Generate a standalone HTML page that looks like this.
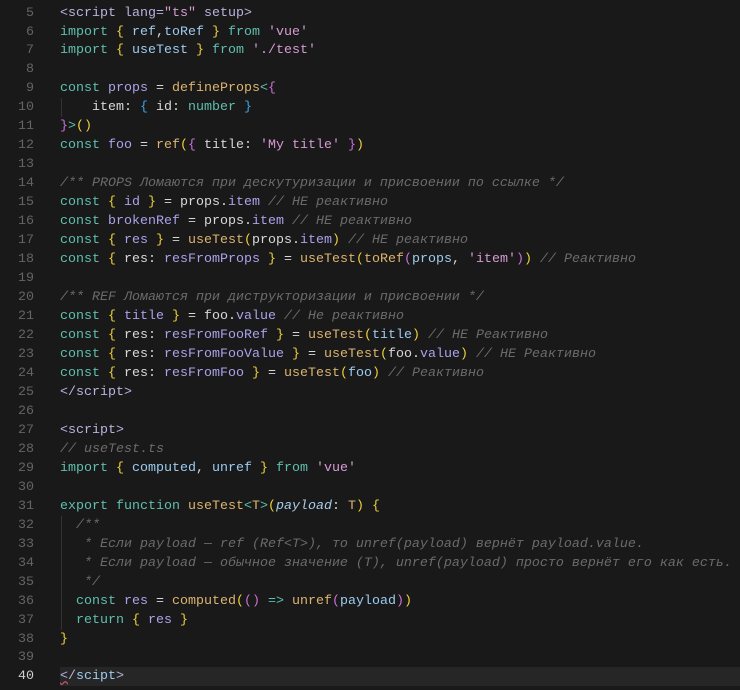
<!DOCTYPE html>
<html><head><meta charset="utf-8"><style>
html,body{margin:0;padding:0;background:#191919;width:740px;height:690px;overflow:hidden}
.ed{position:relative;width:740px;height:690px;font-family:"Liberation Mono","DejaVu Sans Mono",monospace;font-size:13.33px;}
.l{position:absolute;left:0;height:19px;line-height:19px;white-space:pre;width:740px}
.n{position:absolute;left:0;width:34px;text-align:right;color:#646464}
.c{position:absolute;left:60px;color:#d8d8d8}
.cur{background:#262626;left:60px;width:680px}
.k{color:#5fbfae}.v{color:#aaa2ea}.f{color:#dcb36f}.s{color:#d79ad2}.y{color:#eecf3c}.b{color:#3fa1e6}.p{color:#cc6fd6}
.cm{color:#6b6b6b;font-style:italic}.t{color:#b9b2df}.i{color:#9ccbf0}.w{color:#d4d4d4}.it{font-style:italic;color:#a9cde8}
.g{position:absolute;left:61px;width:1px;background:#333}
</style></head><body><div class="ed">
<div class="l cur" style="top:667px"></div>
<div class="g" style="top:98px;height:19px"></div>
<div class="g" style="top:516px;height:114px"></div>
<div class="l" style="top:3.5px"><span class="n">5</span><span class="c"><span class="t">&lt;script lang=</span><span class="s">"ts"</span><span class="t"> setup&gt;</span></span></div>
<div class="l" style="top:22.5px"><span class="n">6</span><span class="c"><span class="k">import</span> <span class="y">{</span> <span class="i">ref</span>,<span class="i">toRef</span> <span class="y">}</span> <span class="k">from</span> <span class="s">'vue'</span></span></div>
<div class="l" style="top:41.4px"><span class="n">7</span><span class="c"><span class="k">import</span> <span class="y">{</span> <span class="i">useTest</span> <span class="y">}</span> <span class="k">from</span> <span class="s">'./test'</span></span></div>
<div class="l" style="top:60.4px"><span class="n">8</span></div>
<div class="l" style="top:79.4px"><span class="n">9</span><span class="c"><span class="k">const</span> <span class="v">props</span> = <span class="f">defineProps</span><span class="k">&lt;</span><span class="p">{</span></span></div>
<div class="l" style="top:98.3px"><span class="n">10</span><span class="c">    item: <span class="b">{</span> id: <span class="k">number</span> <span class="b">}</span></span></div>
<div class="l" style="top:117.3px"><span class="n">11</span><span class="c"><span class="p">}</span><span class="k">&gt;</span><span class="y">()</span></span></div>
<div class="l" style="top:136.3px"><span class="n">12</span><span class="c"><span class="k">const</span> <span class="v">foo</span> = <span class="f">ref</span><span class="y">(</span><span class="p">{</span> title: <span class="s">'My title'</span> <span class="p">}</span><span class="y">)</span></span></div>
<div class="l" style="top:155.3px"><span class="n">13</span></div>
<div class="l" style="top:174.2px"><span class="n">14</span><span class="c"><span class="cm">/** PROPS Ломаются при дескутуризации и присвоении по ссылке */</span></span></div>
<div class="l" style="top:193.2px"><span class="n">15</span><span class="c"><span class="k">const</span> <span class="y">{</span> <span class="v">id</span> <span class="y">}</span> = props.<span class="v">item</span> <span class="cm">// НЕ реактивно</span></span></div>
<div class="l" style="top:212.2px"><span class="n">16</span><span class="c"><span class="k">const</span> <span class="v">brokenRef</span> = props.<span class="v">item</span> <span class="cm">// НЕ реактивно</span></span></div>
<div class="l" style="top:231.1px"><span class="n">17</span><span class="c"><span class="k">const</span> <span class="y">{</span> <span class="v">res</span> <span class="y">}</span> = <span class="f">useTest</span><span class="y">(</span>props.<span class="v">item</span><span class="y">)</span> <span class="cm">// НЕ реактивно</span></span></div>
<div class="l" style="top:250.1px"><span class="n">18</span><span class="c"><span class="k">const</span> <span class="y">{</span> res: <span class="v">resFromProps</span> <span class="y">}</span> = <span class="f">useTest</span><span class="y">(</span><span class="f">toRef</span><span class="p">(</span><span class="i">props</span>, <span class="s">'item'</span><span class="p">)</span><span class="y">)</span> <span class="cm">// Реактивно</span></span></div>
<div class="l" style="top:269.1px"><span class="n">19</span></div>
<div class="l" style="top:288px"><span class="n">20</span><span class="c"><span class="cm">/** REF Ломаются при диструкторизации и присвоении */</span></span></div>
<div class="l" style="top:307px"><span class="n">21</span><span class="c"><span class="k">const</span> <span class="y">{</span> <span class="v">title</span> <span class="y">}</span> = foo.<span class="v">value</span> <span class="cm">// Не реактивно</span></span></div>
<div class="l" style="top:326px"><span class="n">22</span><span class="c"><span class="k">const</span> <span class="y">{</span> res: <span class="v">resFromFooRef</span> <span class="y">}</span> = <span class="f">useTest</span><span class="y">(</span><span class="i">title</span><span class="y">)</span> <span class="cm">// НЕ Реактивно</span></span></div>
<div class="l" style="top:344.9px"><span class="n">23</span><span class="c"><span class="k">const</span> <span class="y">{</span> res: <span class="v">resFromFooValue</span> <span class="y">}</span> = <span class="f">useTest</span><span class="y">(</span>foo.<span class="v">value</span><span class="y">)</span> <span class="cm">// НЕ Реактивно</span></span></div>
<div class="l" style="top:363.9px"><span class="n">24</span><span class="c"><span class="k">const</span> <span class="y">{</span> res: <span class="v">resFromFoo</span> <span class="y">}</span> = <span class="f">useTest</span><span class="y">(</span><span class="i">foo</span><span class="y">)</span> <span class="cm">// Реактивно</span></span></div>
<div class="l" style="top:382.9px"><span class="n">25</span><span class="c"><span class="t">&lt;/script&gt;</span></span></div>
<div class="l" style="top:401.8px"><span class="n">26</span></div>
<div class="l" style="top:420.8px"><span class="n">27</span><span class="c"><span class="t">&lt;script&gt;</span></span></div>
<div class="l" style="top:439.8px"><span class="n">28</span><span class="c"><span class="cm">// useTest.ts</span></span></div>
<div class="l" style="top:458.8px"><span class="n">29</span><span class="c"><span class="k">import</span> <span class="y">{</span> <span class="i">computed</span>, <span class="i">unref</span> <span class="y">}</span> <span class="k">from</span> <span class="s">'vue'</span></span></div>
<div class="l" style="top:477.7px"><span class="n">30</span></div>
<div class="l" style="top:496.7px"><span class="n">31</span><span class="c"><span class="k">export</span> <span class="k">function</span> <span class="f">useTest</span><span class="k">&lt;</span><span class="f">T</span><span class="k">&gt;</span><span class="y">(</span><span class="it">payload</span>: <span class="f">T</span><span class="y">)</span> <span class="y">{</span></span></div>
<div class="l" style="top:515.7px"><span class="n">32</span><span class="c"><span class="cm">  /**</span></span></div>
<div class="l" style="top:534.6px"><span class="n">33</span><span class="c"><span class="cm">   * Если payload — ref (Ref&lt;T&gt;), то unref(payload) вернёт payload.value.</span></span></div>
<div class="l" style="top:553.6px"><span class="n">34</span><span class="c"><span class="cm">   * Если payload — обычное значение (T), unref(payload) просто вернёт его как есть.</span></span></div>
<div class="l" style="top:572.6px"><span class="n">35</span><span class="c"><span class="cm">   */</span></span></div>
<div class="l" style="top:591.5px"><span class="n">36</span><span class="c">  <span class="k">const</span> <span class="v">res</span> = <span class="f">computed</span><span class="y">(</span><span class="p">()</span> <span class="k">=&gt;</span> <span class="f">unref</span><span class="p">(</span><span class="i">payload</span><span class="p">)</span><span class="y">)</span></span></div>
<div class="l" style="top:610.5px"><span class="n">37</span><span class="c">  <span class="k">return</span> <span class="y">{</span> <span class="v">res</span> <span class="y">}</span></span></div>
<div class="l" style="top:629.5px"><span class="n">38</span><span class="c"><span class="y">}</span></span></div>
<div class="l" style="top:648.4px"><span class="n">39</span></div>
<div class="l" style="top:667.4px"><span class="n" style="color:#cfcfcf">40</span><span class="c"><span class="t" style="text-decoration:underline wavy #c0506a">&lt;</span><span class="t">/</span><span class="i">scipt</span><span class="t">&gt;</span></span></div>
</div></body></html>
